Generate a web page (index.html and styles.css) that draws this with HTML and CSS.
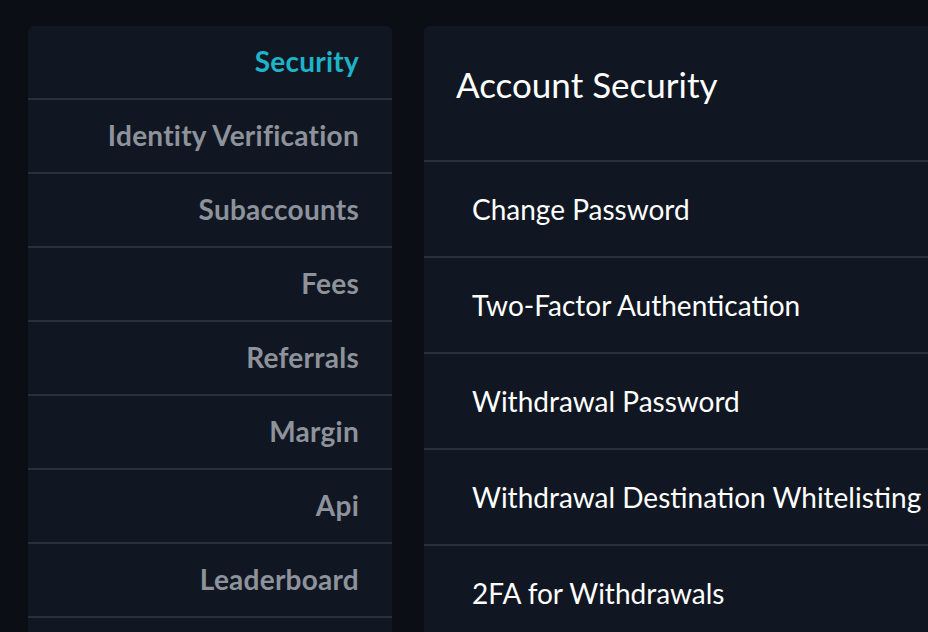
FILE: index.html
```html
<!DOCTYPE html>
<html>
<head>
<meta charset="utf-8">
<link rel="stylesheet" href="styles.css">
</head>
<body>
<div class="page">
  <nav class="sidebar">
    <a class="nav-item active">Security</a>
    <a class="nav-item">Identity Verification</a>
    <a class="nav-item">Subaccounts</a>
    <a class="nav-item">Fees</a>
    <a class="nav-item">Referrals</a>
    <a class="nav-item">Margin</a>
    <a class="nav-item">Api</a>
    <a class="nav-item">Leaderboard</a>
  </nav>
  <main class="panel">
    <header class="panel-header">Account Security</header>
    <div class="row">Change Password</div>
    <div class="row">Two-Factor Authentication</div>
    <div class="row">Withdrawal Password</div>
    <div class="row">Withdrawal Destination Whitelisting</div>
    <div class="row">2FA for Withdrawals</div>
  </main>
</div>
</body>
</html>
```

FILE: styles.css
```css
html, body {
  margin: 0;
  padding: 0;
  background: #0b0e15;
  font-family: Lato, "Open Sans", sans-serif;
  overflow: hidden;
}
.page {
  display: flex;
  align-items: stretch;
  gap: 32px;
  padding: 26px 0 0 28px;
  height: 632px;
  box-sizing: border-box;
}
.sidebar {
  width: 364px;
  flex: none;
  background: #111722;
  border-radius: 6px 6px 0 0;
  display: flex;
  flex-direction: column;
}
.nav-item {
  display: flex;
  align-items: center;
  justify-content: flex-end;
  height: 70px;
  flex: none;
  padding: 0 33px 2px 0;
  box-sizing: content-box;
  border-bottom: 2px solid #2b2f38;
  font-size: 28px;
  font-weight: 700;
  letter-spacing: 0.25px;
  color: #8e929a;
}
.nav-item.active {
  color: #1db3c8;
}
.panel {
  flex: 1;
  background: #111722;
  border-radius: 6px 0 0 0;
  min-width: 0;
  overflow: hidden;
}
.panel-header {
  height: 136px;
  box-sizing: border-box;
  padding: 0 0 18px 32px;
  display: flex;
  align-items: center;
  border-bottom: 2px solid #2b2f38;
  font-size: 35px;
  color: #ffffff;
}
.row {
  height: 94px;
  display: flex;
  align-items: center;
  padding-left: 48px;
  border-bottom: 2px solid #2b2f38;
  font-size: 28px;
  color: #ffffff;
  white-space: nowrap;
}
```
